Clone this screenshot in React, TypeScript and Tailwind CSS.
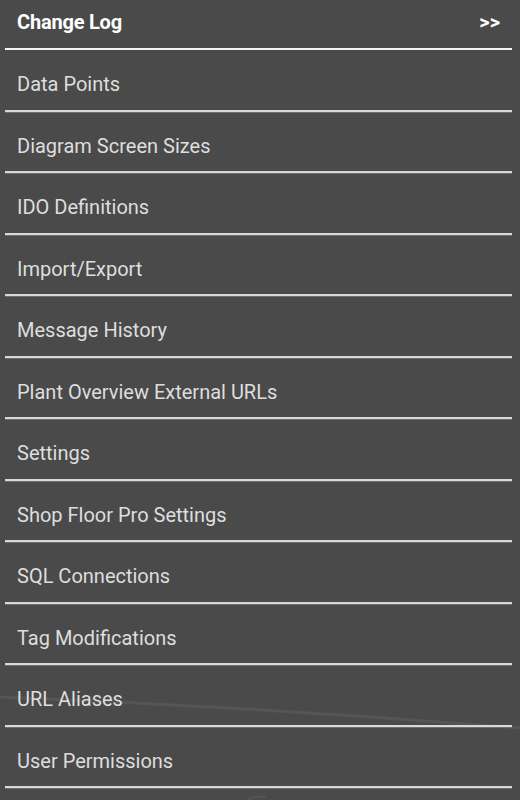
import React from "react";

const items = [
  "Data Points",
  "Diagram Screen Sizes",
  "IDO Definitions",
  "Import/Export",
  "Message History",
  "Plant Overview External URLs",
  "Settings",
  "Shop Floor Pro Settings",
  "SQL Connections",
  "Tag Modifications",
  "URL Aliases",
  "User Permissions",
];

const App = () => {
  return (
    <div
      className="relative w-[520px] h-[800px] overflow-hidden bg-[#4a4a4a]"
      style={{ fontFamily: "Roboto, 'Liberation Sans', sans-serif" }}
    >
      {/* faint streak in the background */}
      <svg
        className="absolute left-0 top-0 pointer-events-none"
        width="520"
        height="800"
      >
        <path d="M0 697 Q 260 707 520 728" stroke="#555555" strokeWidth="3" fill="none" />
        <path d="M248 800 Q 256 795 266 797" stroke="#555555" strokeWidth="2" fill="none" />
      </svg>

      <div className="relative ml-[5px] w-[507px]">
        <div className="flex items-center justify-between h-[50px] pb-[4px] px-[12px] border-b-2 border-[#f4f4f4]">
          <span className="text-[20px] font-bold text-white tracking-[-0.2px]">Change Log</span>
          <span className="text-[20px] font-bold text-white">&gt;&gt;</span>
        </div>
        {items.map((item) => (
          <div
            key={item}
            className="flex items-center h-[61.5px] pt-[9px] px-[12px] border-b-2 border-[#d8d8d8] shadow-[0_1px_0_#6e6e6e]"
          >
            <span className="text-[20px] text-[#dedede]">{item}</span>
          </div>
        ))}
      </div>
    </div>
  );
};

export default App;
